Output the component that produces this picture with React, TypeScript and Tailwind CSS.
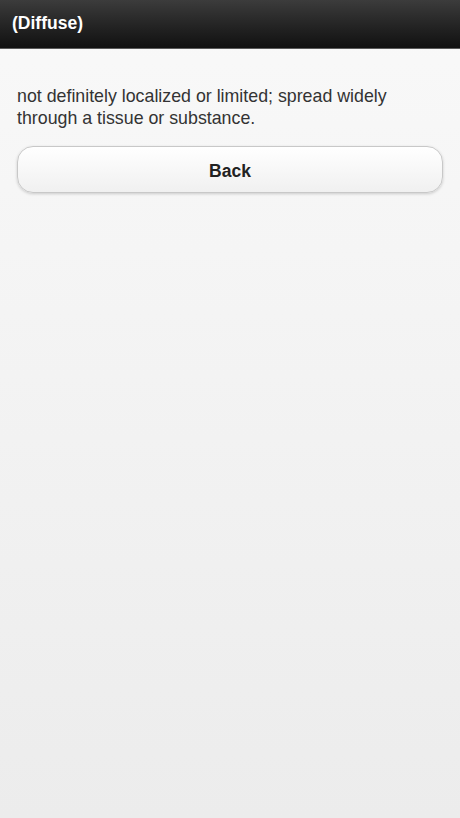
export default function App() {
  return (
    <div className="min-h-[818px] flex flex-col bg-gradient-to-b from-[#f9f9f9] to-[#ececec] font-['Liberation_Sans',Arial,sans-serif]">
      {/* Header */}
      <header className="h-[49px] flex items-center px-[12px] bg-gradient-to-b from-[#3c3c3c] to-[#111111] border-b border-[#5a5a5a]">
        <h1 className="text-[17.5px] font-bold text-white leading-none">(Diffuse)</h1>
      </header>

      <main className="px-[17px] pt-[36px]">
        <p className="text-[17.8px] leading-[22px] text-[#333333]">
          not definitely localized or limited; spread widely through a tissue or substance.
        </p>
        <button className="mt-[17px] w-full h-[47px] pt-[3px] rounded-[16px] border border-[#c8c8c8] bg-gradient-to-b from-white to-[#f0f0f0] shadow-[0_1px_3px_rgba(0,0,0,0.18)] text-[17.5px] font-bold text-[#222222]">
          Back
        </button>
      </main>
    </div>
  );
}
